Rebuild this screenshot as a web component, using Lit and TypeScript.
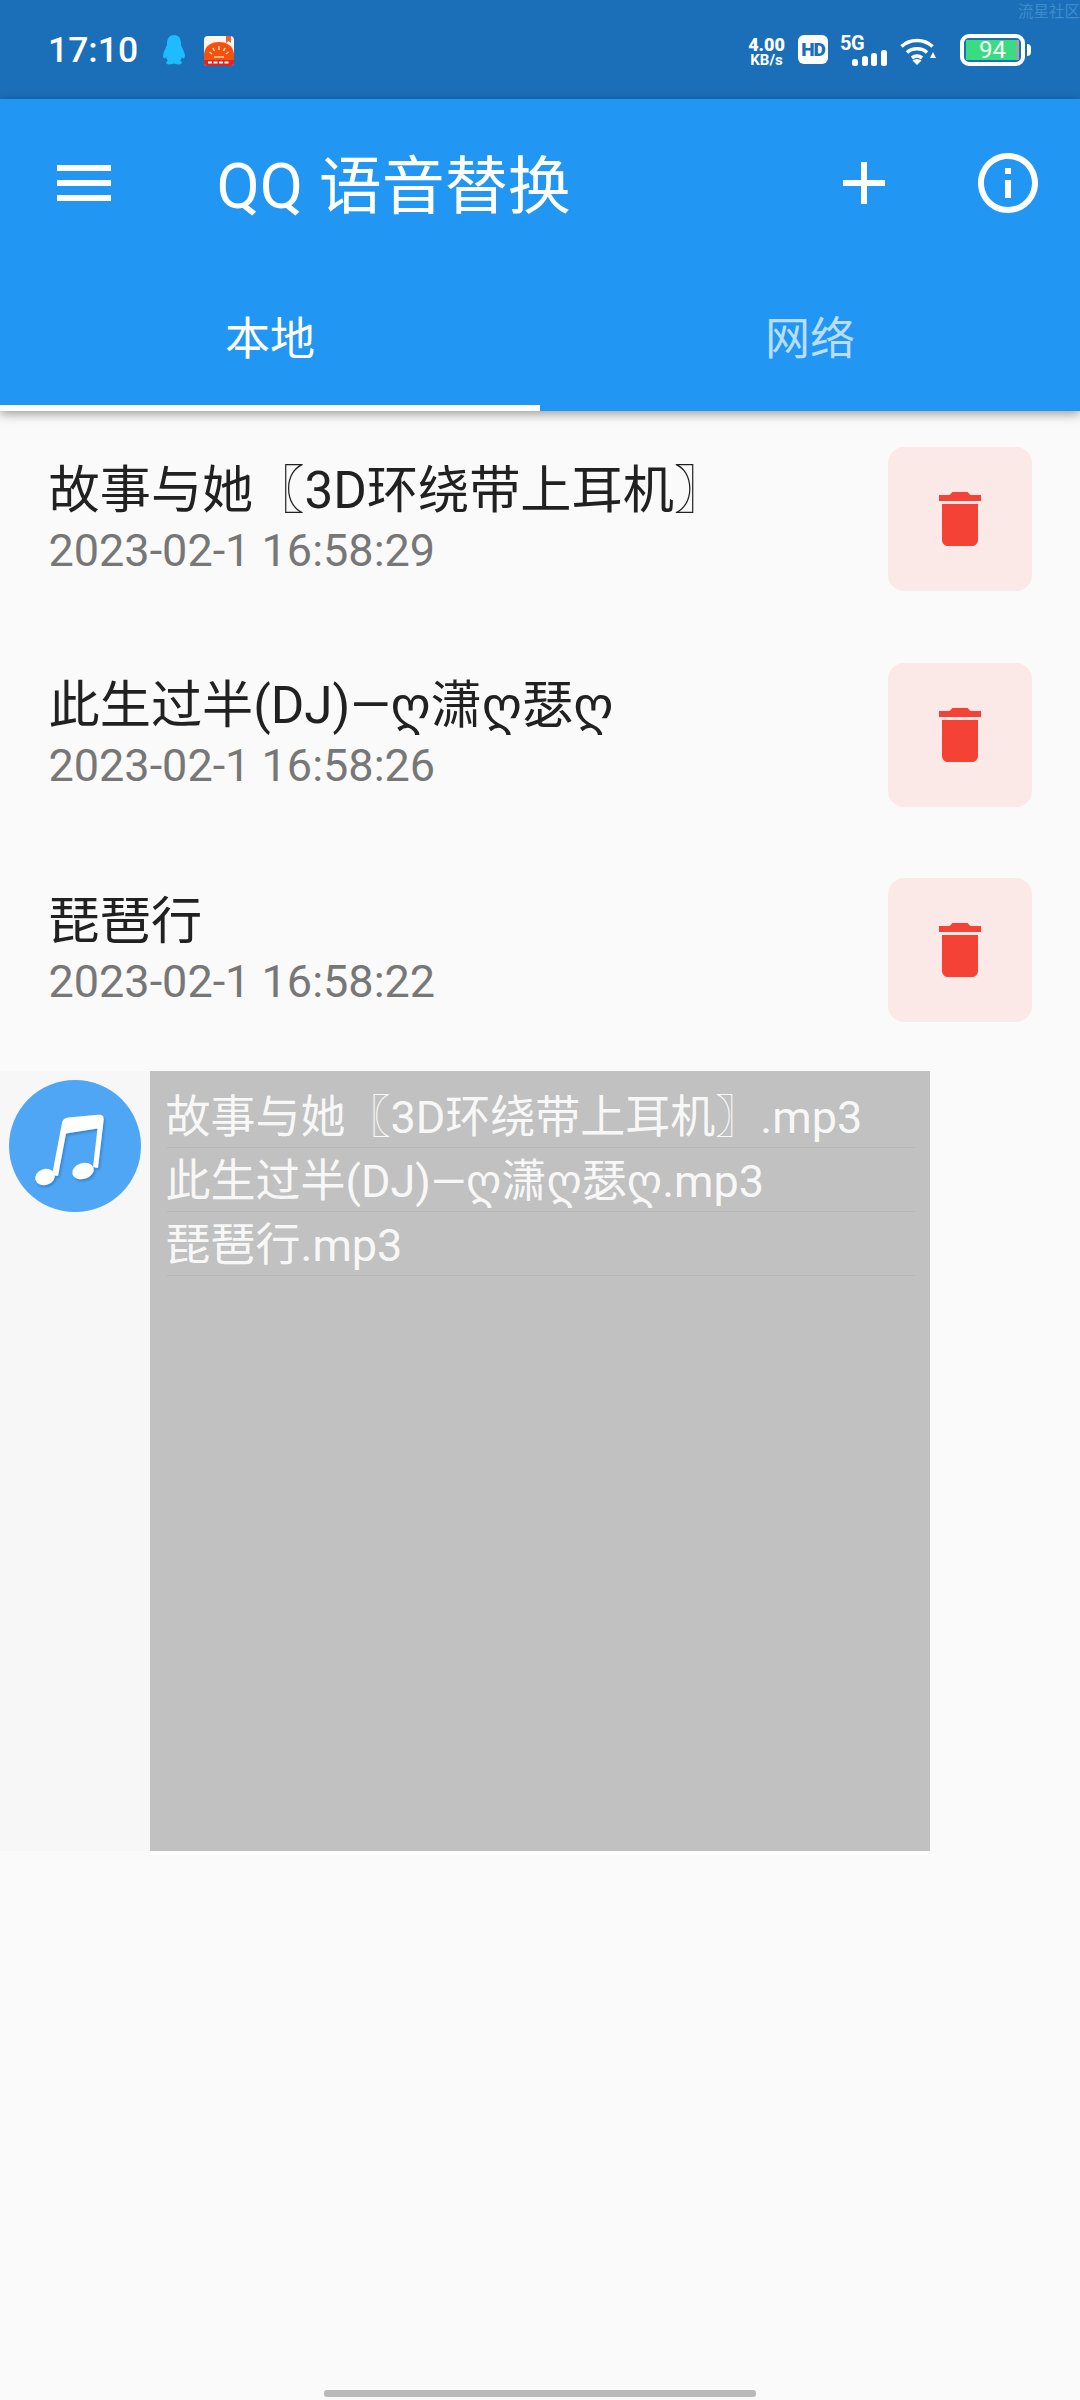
import { LitElement, html, css, svg } from "lit";
import { customElement } from "lit/decorators.js";

const ITEMS = [
  { name: "故事与她〖3D环绕带上耳机〗", time: "2023-02-1 16:58:29" },
  { name: "此生过半(DJ)—ღ潇ღ瑟ღ", time: "2023-02-1 16:58:26" },
  { name: "琵琶行", time: "2023-02-1 16:58:22" },
];

const icon = (d: string, cls = "icon") =>
  html`<svg class=${cls} viewBox="0 0 24 24"><path d=${d}></path></svg>`;

@customElement("app-root")
export class AppRoot extends LitElement {
  static styles = css`
    :host {
      display: block;
      width: 1080px;
      height: 2400px;
      overflow: hidden;
      background: #fafafa;
      font-family: Roboto, "Noto Sans CJK SC", "DejaVu Sans", sans-serif;
    }
    .page { height: 2400px; display: flex; flex-direction: column; position: relative; }

    .status {
      height: 99px; flex: none; background: #1b6fb8; color: #fff;
      display: flex; align-items: center; padding: 0 49px 0 48px; box-sizing: border-box; position: relative;
    }
    .time { font-size: 35.500px; font-weight: 500; line-height: 44px; width: 90px; white-space: nowrap; }
    .penguin { width: 24px; height: 30px; margin-left: 24px; }
    .appicon { width: 30px; height: 30px; margin-left: 18px; margin-top: 2px; }
    .status-right { margin-left: auto; display: flex; align-items: center; margin-top: 3px; }
    .net { width: 35px; display: flex; flex-direction: column; align-items: center; font-weight: 700; margin-top: 1px; }
    .net b { font-size: 18px; line-height: 17px; }
    .net i { font-style: normal; font-size: 15px; line-height: 14px; }
    .hd {
      width: 30px; height: 29px; margin-left: 14px; margin-top: -3px; background: #fff; border-radius: 6px;
      color: #1b6fb8; font-size: 19px; font-weight: 900; line-height: 29px; text-align: center; letter-spacing: -1px;
    }
    .five { width: 47px; margin-left: 12px; display: flex; flex-direction: column; }
    .five b { font-size: 20px; line-height: 14px; font-weight: 700; letter-spacing: -0.5px; }
    .five svg { width: 35px; height: 16px; align-self: flex-end; display: block; }
    .wifi { width: 36px; height: 27px; margin-left: 13px; }
    .battery { display: flex; align-items: center; margin-left: 24px; margin-top: -3px; }
    .shell {
      width: 65px; height: 32px; box-sizing: border-box; border: 4px solid #fff; border-radius: 9px;
      padding: 2px; display: flex;
    }
    .charge {
      flex: 1; background: linear-gradient(90deg, #39dc80 0 95%, #9aa8a0 95%); color: #fff; font-size: 24px;
      line-height: 20px; text-align: center;
    }
    .nub { width: 4px; height: 12px; margin-left: 2px; background: #fff; border-radius: 0 6px 6px 0; }
    .mark {
      position: absolute; right: 0; top: 0; font-size: 15.500px; line-height: 24px; height: 24px; color: #3d8ccc; white-space: nowrap;
    }

    .bar { background: #2196f3; color: #fff; flex: none; box-shadow: 0 3px 10px rgba(0, 0, 0, 0.38); position: relative; z-index: 1; }
    .toolbar { height: 168px; display: flex; align-items: center; padding: 0 36px 0 48px; box-sizing: border-box; }
    .icon { width: 72px; height: 72px; fill: #fff; display: block; flex: none; }
    .title { font-size: 63px; line-height: 84px; margin-left: 96.500px; flex: 1; white-space: nowrap; margin-top: 8px; }
    .plus { margin-right: 72px; }
    .tabs { display: flex; height: 144px; }
    .tab {
      flex: 1; display: flex; align-items: center; justify-content: center; font-size: 45px; box-sizing: border-box;
      border-bottom: 6px solid transparent; padding-bottom: 2px; color: rgba(255, 255, 255, 0.7);
    }
    .tab.on { color: #fff; border-bottom-color: #fff; }

    .list { display: flex; flex-direction: column; flex: none; }
    .row { height: 215.500px; box-sizing: border-box; padding: 36px 48px 35.500px 48.500px; display: flex; align-items: center; }
    .info { flex: 1; display: flex; flex-direction: column; min-width: 0; }
    .name { font-size: 51.200px; line-height: 63px; color: #212121; white-space: nowrap; }
    .date { font-size: 45px; line-height: 58px; color: #777777; white-space: nowrap; }
    .del { width: 144px; height: 144px; background: #fbe9e7; border-radius: 16px; display: flex; align-items: center; justify-content: center; flex: none; }
    .del svg { fill: #f44336; }

    .player { display: flex; margin-top: 13.500px; flex: none; }
    .side { width: 150px; height: 780px; background: #f7f7f7; padding: 9px; box-sizing: border-box; flex: none; }
    .disc { width: 132px; height: 132px; display: block; }
    .panel {
      width: 780px; height: 784px; box-sizing: border-box; background: #c1c1c1; border-bottom: 4px solid #fff;
      padding: 13px 15px 0 15.500px; color: rgba(255, 255, 255, 0.9);
    }
    .file {
      height: 64px; box-sizing: border-box; border-bottom: 1px solid #b8b8b8; font-size: 45px; line-height: 67px; white-space: nowrap;
    }
    .home { margin-top: auto; margin-bottom: 3px; align-self: center; width: 432px; height: 7px; background: #b9b9b9; border-radius: 3px; flex: none; }
  `;

  render() {
    return html`<div class="page">
      <div class="status">
        <div class="mark">流星社区</div>
        <div class="time">17:10</div>
        <svg class="penguin" viewBox="0 0 24 30"><path fill="#1ebcff" d="M12 0C6.5 0 5 4.5 5 9c0 2-1.500 4-3 8-1.500 3-1 6 .5 6.500.5 0 1.100-.9 1.500-1.500.6 1.800 1 2.800 2 3.800-1.500.7-2 1.700-1.500 2.700 1 1.500 5 1 7.500 0 2.500 1 6.500 1.500 7.500 0 .5-1 0-2-1.500-2.700 1-1 1.400-2 2-3.800.4.6 1 1.500 1.500 1.500 1.500-.5 2-3.500.5-6.500-1.500-4-3-6-3-8 0-4.500-1.500-9-7-9Z"/></svg>
        <svg class="appicon" viewBox="0 0 30 30">
          <rect width="30" height="30" rx="4" fill="#fdf6ef"/>
          <path d="M0 18C1 9 8 6 15 6s14 3 15 12v8a4 4 0 0 1-4 4H4a4 4 0 0 1-4-4Z" fill="#f4510f"/>
          <path d="M0 24h30v2a4 4 0 0 1-4 4H4a4 4 0 0 1-4-4Z" fill="#d9262b"/>
          <path d="M22 0h5v7l-2.500-2-2.500 2Z" fill="#e9603c"/>
          <path d="M15 10v4M9 12l1.500 3M21 12l-1.500 3M5.500 16l2.500 2M24.500 16l-2.500 2M10 21h10" stroke="#ffd9a0" stroke-width="1.600" fill="none"/>
          <path d="M4 26.500h22" stroke="#fff" stroke-width="2" stroke-dasharray="4 1.500"/>
        </svg>
        <div class="status-right">
          <div class="net"><b>4.00</b><i>KB/s</i></div>
          <div class="hd">HD</div>
          <div class="five"><b>5G</b>
            <svg viewBox="0 0 35 16">${svg`
              <rect x="0" y="9" width="6" height="7" rx="2.500" fill="#fff"/>
              <rect x="10" y="6" width="6" height="10" rx="2.500" fill="#fff"/>
              <rect x="19" y="3" width="6" height="13" rx="2.500" fill="#fff"/>
              <rect x="29" y="0" width="6" height="16" rx="2.500" fill="#fff"/>`}</svg>
          </div>
          <svg class="wifi" viewBox="0 0 36 27">${svg`
            <g fill="none" stroke="#fff" stroke-width="3.600">
              <path d="M1.500 8.500C10 .5 24 .5 32.500 8.500"/>
              <path d="M7 14.500C12.500 9.500 21.500 9.500 27 14.500"/>
              <path d="M12 20C15 17.500 19 17.500 22 20"/>
            </g>
            <path d="M17 27l-4.500-4.500c3-2 6-2 9 0Z" fill="#fff"/>
            <path d="M33 14l3 6h-6Z" fill="#fff"/>`}</svg>
          <div class="battery">
            <div class="shell"><div class="charge">94</div></div>
            <div class="nub"></div>
          </div>
        </div>
      </div>

      <div class="bar">
        <div class="toolbar">
          ${icon("M3 18h18v-2H3v2zm0-5h18v-2H3v2zm0-7v2h18V6H3z")}
          <div class="title">QQ 语音替换</div>
          ${icon("M19 13h-6v6h-2v-6H5v-2h6V5h2v6h6v2z", "icon plus")}
          ${icon("M11 7h2v2h-2zm0 4h2v6h-2zm1-9C6.480 2 2 6.480 2 12s4.480 10 10 10 10-4.480 10-10S17.520 2 12 2zm0 18c-4.410 0-8-3.590-8-8s3.590-8 8-8 8 3.590 8 8-3.590 8-8 8z")}
        </div>
        <div class="tabs">
          <div class="tab on">本地</div>
          <div class="tab">网络</div>
        </div>
      </div>

      <div class="list">
        ${ITEMS.map(
          (it) => html`<div class="row">
            <div class="info">
              <div class="name">${it.name}</div>
              <div class="date">${it.time}</div>
            </div>
            <div class="del">${icon("M6 19c0 1.100.9 2 2 2h8c1.100 0 2-.9 2-2V7H6v12zM19 4h-3.500l-1-1h-5l-1 1H5v2h14V4z")}</div>
          </div>`
        )}
      </div>

      <div class="player">
        <div class="side">
          <svg class="disc" viewBox="9 9 132 132">${svg`
            <defs><filter id="ns" x="-20%" y="-20%" width="140%" height="140%"><feDropShadow dx="1.500" dy="2" stdDeviation="1" flood-color="#1f6fc0" flood-opacity=".6"/></filter></defs>
            <circle cx="75" cy="75" r="66" fill="#4fa6f5"/>
            <g fill="#fff" filter="url(#ns)">
              <path d="M62 52c.8-3.500 2.500-4.800 6-5.500L98 43.800c4.300-.6 6 1.200 5.700 5L98 97l-5-1 4.500-38.500-31.500 5L58 105l-6-1Z"/>
              <ellipse cx="45" cy="106" rx="10" ry="8" transform="rotate(-18 45 106)"/>
              <ellipse cx="83" cy="100" rx="11" ry="8" transform="rotate(-18 83 100)"/>
            </g>`}</svg>
        </div>
        <div class="panel">
          ${ITEMS.map((it) => html`<div class="file">${it.name}.mp3</div>`)}
        </div>
      </div>

      <div class="home"></div>
    </div>`;
  }
}
